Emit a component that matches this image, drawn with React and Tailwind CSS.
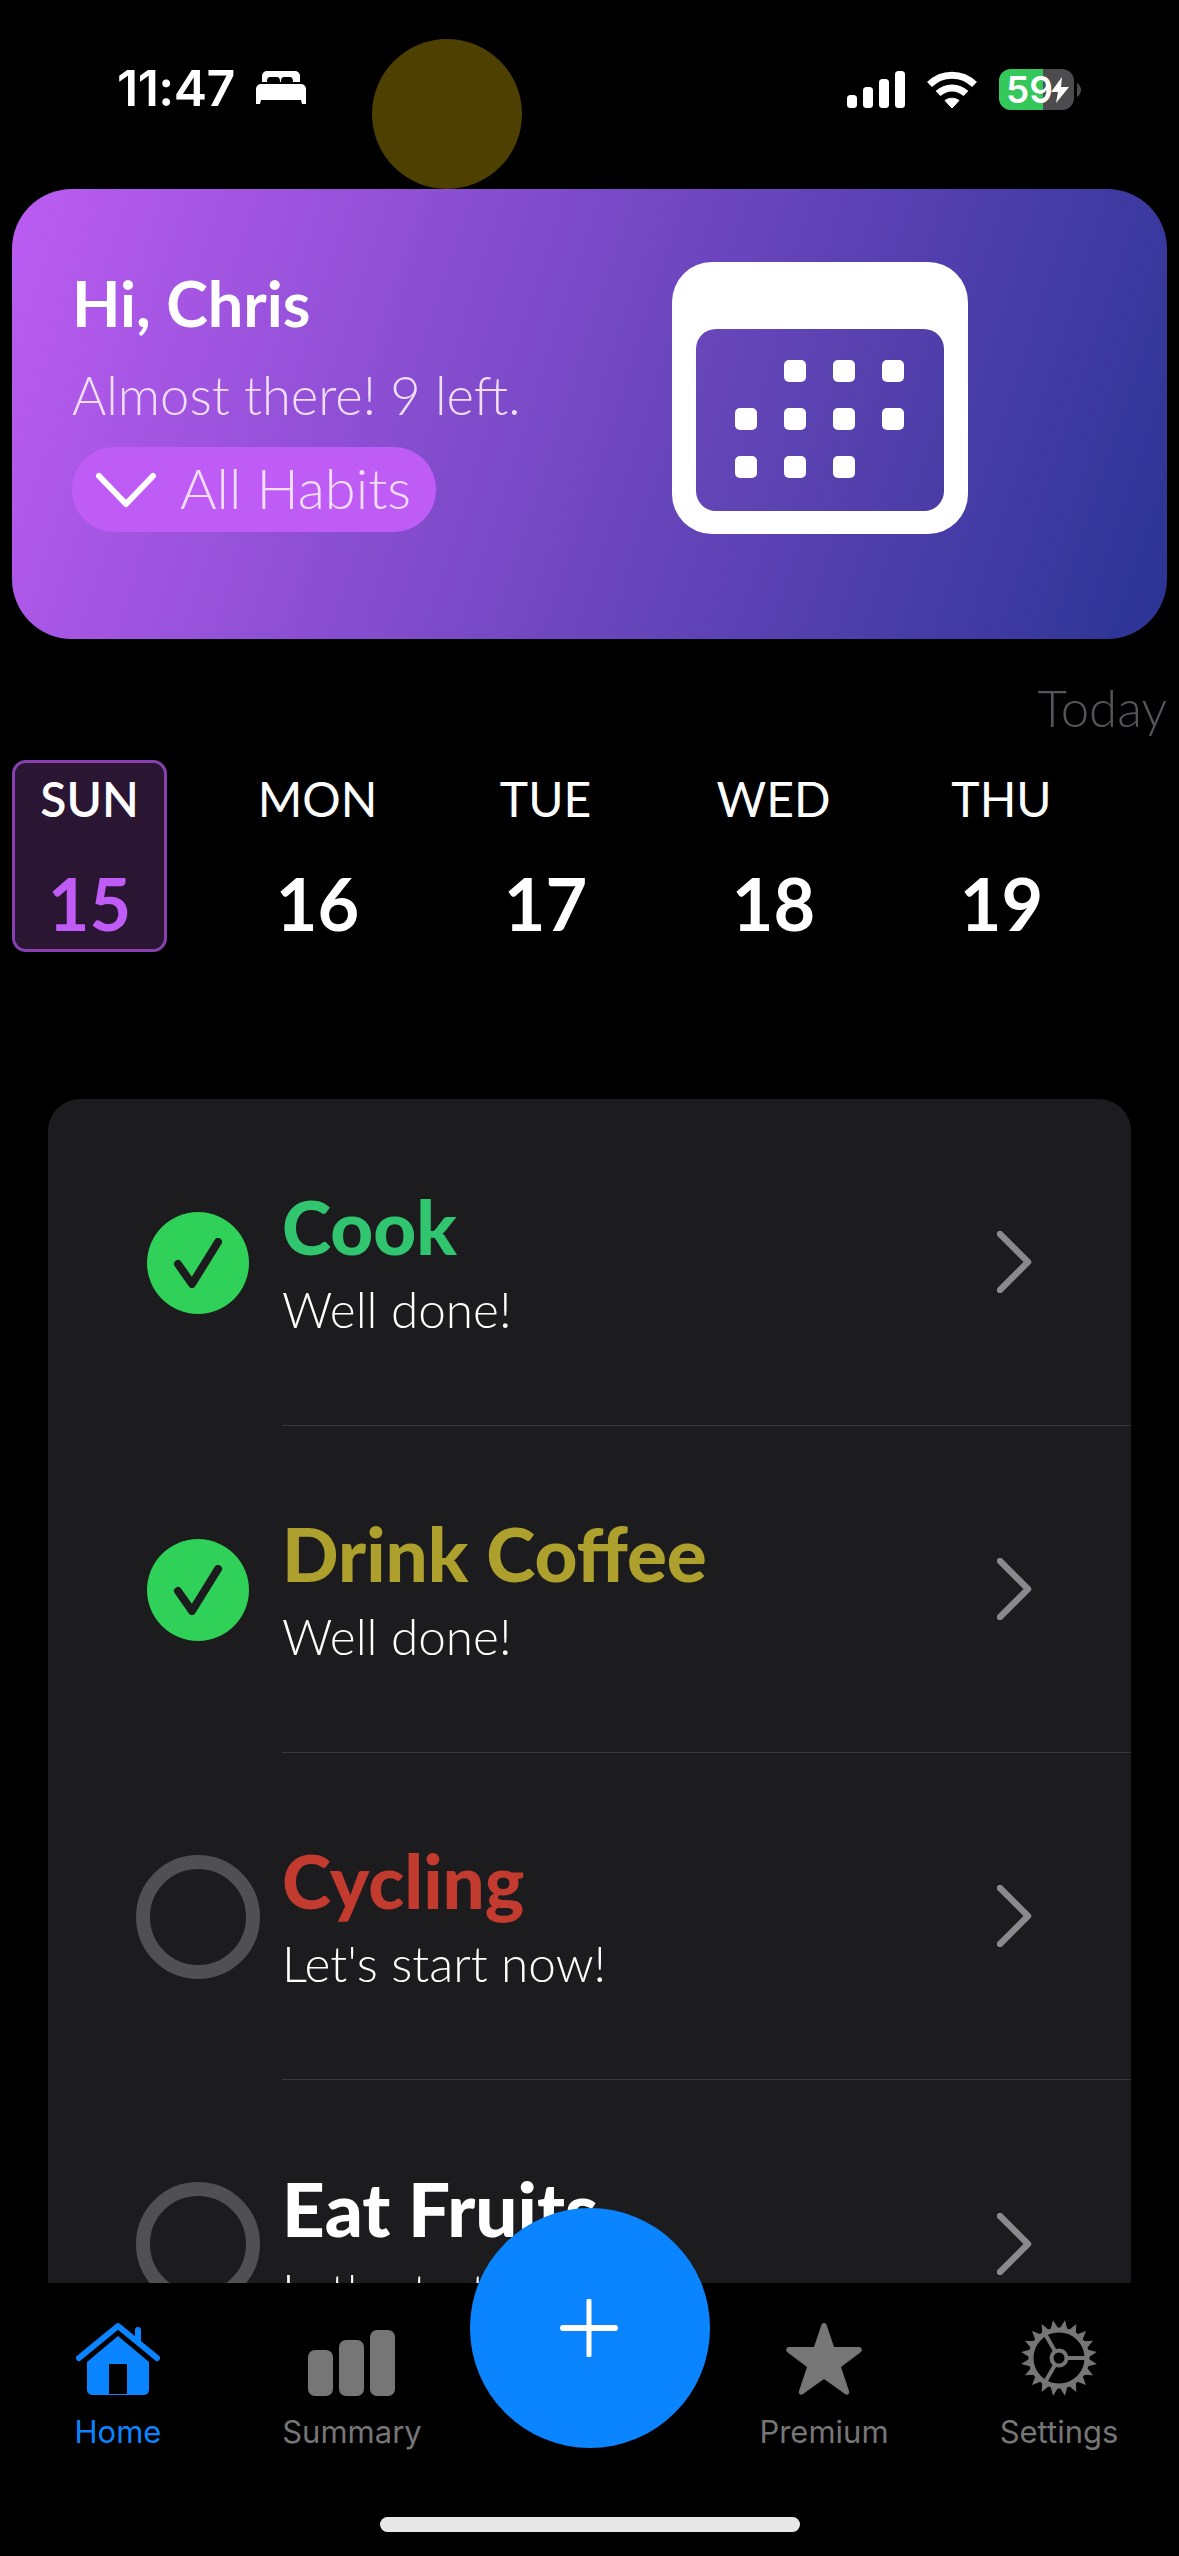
import React from "react";

const sans = "font-['Lato','Noto_Sans',sans-serif]";
const sys = "font-['Inter','Roboto',sans-serif]";

function Bed() {
  return (
    <svg width="52" height="36" viewBox="0 0 52 36" fill="white">
      <path d="M7 12V6a5 5 0 0 1 5-5h28a5 5 0 0 1 5 5v6h-7c0-4-1-5-4-5h-4c-3 0-4 1-4 5h-1c0-4-1-5-4-5h-5c-3 0-4 1-4 5z" />
      <path d="M6 14h40a5 5 0 0 1 5 5v15h-4l-1-4H6l-1 4H1V19a5 5 0 0 1 5-5z" />
    </svg>
  );
}

function Signal() {
  return (
    <svg width="58" height="38" viewBox="0 0 58 38" fill="white">
      <rect x="0" y="24" width="10" height="13" rx="3.5" />
      <rect x="16" y="16" width="10" height="21" rx="3.5" />
      <rect x="32" y="8" width="10" height="29" rx="3.5" />
      <rect x="48" y="0" width="10" height="37" rx="3.5" />
    </svg>
  );
}

function Wifi() {
  return (
    <svg width="50" height="38" viewBox="0 0 50 38" fill="none" stroke="white" strokeWidth="7">
      <path d="M2.5 13.500C15 1 35 1 47.5 13.500" />
      <path d="M11 22.500c8-7.500 20-7.500 28 0" />
      <path d="M18 29.500c4-3 10-3 14 0L25 37z" fill="white" strokeWidth="1" />
    </svg>
  );
}

function Battery() {
  return (
    <div className="flex items-center">
      <div className="relative flex h-[41px] w-[75px] items-center overflow-hidden rounded-[12px] bg-[#4c4c4e]">
        <div className="h-full w-[44px] bg-[#34c759]" />
        <span className={`absolute left-[7px] top-[0px] text-[37px] font-semibold leading-[41px] text-white ${sys}`}>59</span>
        <svg className="absolute left-[52px] top-[8px]" width="18" height="26" viewBox="0 0 18 26" fill="white">
          <path d="M11 0 0 15h7l-2 11L18 10h-8z" />
        </svg>
      </div>
      <svg className="ml-[3px]" width="4" height="14" viewBox="0 0 4 14" fill="#4c4c4e">
        <path d="M0 0c2 1 4 4 4 7s-2 6-4 7z" />
      </svg>
    </div>
  );
}

function CalendarIcon() {
  const dots = [
    [0, 1, 1, 1],
    [1, 1, 1, 1],
    [1, 1, 1, 0],
  ];
  return (
    <div className="flex h-[272px] w-[296px] flex-col rounded-[40px] bg-white px-[24px] pt-[67px] pb-[23px]">
      <div className="flex h-[182px] flex-col gap-[26px] rounded-[20px] bg-[linear-gradient(108deg,#6a47bc_0%,#493ca5_100%)] pl-[39px] pt-[31px]">
        {dots.map((row, i) => (
          <div key={i} className="flex gap-[27px]">
            {row.map((d, j) => (
              <div key={j} className={`h-[22px] w-[22px] rounded-[5px] ${d ? "bg-white" : "bg-transparent"}`} />
            ))}
          </div>
        ))}
      </div>
    </div>
  );
}

function Chevron() {
  return (
    <svg width="36" height="62" viewBox="0 0 36 62" fill="none" stroke="#8a8a8e" strokeWidth="6.500" strokeLinecap="round" strokeLinejoin="round">
      <path d="M3 3l28 28L3 59" />
    </svg>
  );
}

function Check() {
  return (
    <div className="flex h-[102px] w-[102px] items-center justify-center rounded-full bg-[#30d158]">
      <svg width="52" height="50" viewBox="0 0 52 50" fill="none" stroke="#1c1c1e" strokeWidth="8" strokeLinecap="round" strokeLinejoin="round">
        <path d="M6 26l14 20L46 4" />
      </svg>
    </div>
  );
}

function Ring() {
  return <div className="h-[124px] w-[124px] shrink-0 rounded-full border-[14px] border-[#505052]" />;
}

function Row({ title, color, sub, done, last }) {
  return (
    <div className="flex h-[327px] shrink-0">
      <div className="flex w-[234px] shrink-0 items-center justify-center pl-[84px] pr-[18px]">
        {done ? <Check /> : <Ring />}
      </div>
      <div className={`flex flex-1 items-center justify-between pr-[98px] ${last ? "" : "border-b border-[#38383a]"}`}>
        <div className="flex flex-col">
          <div className={`text-[74.500px] font-black leading-[80px] ${sans}`} style={{ color }}>{title}</div>
          <div className={`mt-[14px] text-[49.500px] font-light leading-[58px] text-white ${sans}`}>{sub}</div>
        </div>
        <Chevron />
      </div>
    </div>
  );
}

function Day({ d, n, active }) {
  return (
    <div className={`flex h-[192px] w-[155px] flex-col items-center rounded-[14px] border-[3px] pt-[11px] ${active ? "border-[#8a3fb0] bg-[#2a1533]" : "border-transparent"}`}>
      <div className={`text-[48px] leading-[50px] text-white ${active ? "font-semibold" : "font-normal"} ${sans}`}>{d}</div>
      <div className={`mt-[47px] text-[72px] font-bold leading-[64px] ${active ? "text-[#bf5cf5]" : "text-white"} ${sans}`}>{n}</div>
    </div>
  );
}

function Tab({ label, active, children, className }) {
  return (
    <div className={`flex w-[200px] flex-col items-center ${className || ""}`}>
      <div className="flex h-[80px] items-end justify-center">{children}</div>
      <div className={`mt-[18px] text-[31px] leading-[36px] ${active ? "text-[#0a84ff]" : "text-[#767676]"} ${sys}`}>{label}</div>
    </div>
  );
}

function Gear() {
  const teeth = Array.from({ length: 20 }, (_, i) => i * 18);
  return (
    <svg width="76" height="76" viewBox="-38 -38 76 76" fill="none" stroke="#767676">
      {teeth.map((a) => (
        <path key={a} d="M-3.500 -29L0 -37L3.500 -29z" fill="#767676" strokeWidth="1" transform={`rotate(${a + 9})`} />
      ))}
      <circle r="28" strokeWidth="5" />
      <circle r="7.500" strokeWidth="4" />
      <path d="M7.500 0H28M-3.800 -6.500L-14 -24.200M-3.800 6.500L-14 24.200" strokeWidth="4" />
    </svg>
  );
}

export default function App() {
  const rows = [
    { title: "Cook", color: "#30c56e", sub: "Well done!", done: true },
    { title: "Drink Coffee", color: "#ada02c", sub: "Well done!", done: true },
    { title: "Cycling", color: "#c23b2e", sub: "Let's start now!" },
    { title: "Eat Fruits", color: "#ffffff", sub: "Let's start now!", last: true },
  ];
  return (
    <div className="relative flex h-[2556px] w-[1179px] flex-col overflow-hidden bg-black">
      {/* status bar */}
      <div className="flex h-[189px] shrink-0 items-start justify-between pl-[117px] pr-[98px] pt-[63px]">
        <div className="flex items-center gap-[20px]">
          <span className={`text-[50px] font-semibold leading-[50px] tracking-[-0.5px] text-white ${sys}`}>11:47</span>
          <Bed />
        </div>
        <div className="flex items-center gap-[22px] pt-[6px]">
          <Signal />
          <Wifi />
          <Battery />
        </div>
      </div>
      <div className="absolute left-[372px] top-[39px] h-[150px] w-[150px] rounded-full bg-[#4d4000]" />

      {/* hero card */}
      <div className="mx-[12px] flex h-[450px] shrink-0 items-start justify-between rounded-[60px] bg-[linear-gradient(108deg,#bc5cf2_0%,#2a3494_100%)] pl-[60px] pr-[199px] pt-[73px]">
        <div className="flex flex-col items-start">
          <div className={`mt-[6px] text-[63px] font-bold leading-[70px] text-white ${sans}`}>Hi, Chris</div>
          <div className={`mt-[25px] text-[52.500px] font-light leading-[64px] text-[#f0def8] ${sans}`}>Almost there! 9 left.</div>
          <div className="mt-[20px] flex h-[85px] w-[364px] items-center gap-[24px] rounded-[42px] bg-[#bf5cf5] pl-[24px]">
            <svg width="60" height="40" viewBox="0 0 60 40" fill="none" stroke="white" strokeWidth="6" strokeLinecap="round" strokeLinejoin="round">
              <path d="M3 6l27 28L57 6" />
            </svg>
            <span className={`-mt-[3px] text-[56px] font-light leading-[64px] text-[#f0def8] ${sans}`}>All Habits</span>
          </div>
        </div>
        <CalendarIcon />
      </div>

      {/* Today */}
      <div className={`mr-[12px] mt-[37px] h-[75px] shrink-0 text-right text-[51px] font-light leading-[64px] text-[#56565a] ${sans}`}>Today</div>

      {/* week */}
      <div className="ml-[12px] mt-[9px] flex h-[192px] shrink-0 gap-[73px]">
        <Day d="SUN" n="15" active />
        <Day d="MON" n="16" />
        <Day d="TUE" n="17" />
        <Day d="WED" n="18" />
        <Day d="THU" n="19" />
      </div>

      {/* list */}
      <div className="mx-[48px] mt-[147px] flex min-h-0 flex-1 flex-col overflow-hidden rounded-t-[32px] bg-[#1c1c1e]">
        {rows.map((r) => (
          <Row key={r.title} {...r} />
        ))}
      </div>

      {/* tab bar */}
      <div className="relative h-[273px] shrink-0 bg-black">
        <div className="flex items-start justify-between pl-[18px] pr-[20px] pt-[33px]">
          <div className="flex">
            <Tab label="Home" active>
              <svg width="84" height="74" viewBox="0 0 84 74" fill="none">
                <path d="M3 36 42 4l39 32M62 19V8" stroke="#0a84ff" strokeWidth="6" strokeLinecap="round" strokeLinejoin="round" />
                <path d="M42 14 73 40v28a5 5 0 0 1-5 5H16a5 5 0 0 1-5-5V40zM33 42v30h18V42z" fill="#0a84ff" fillRule="evenodd" />
              </svg>
            </Tab>
            <Tab label="Summary" className="ml-[34px]">
              <svg width="88" height="66" viewBox="0 0 88 66" fill="#767676">
                <rect x="0" y="20" width="25" height="46" rx="7" />
                <rect x="31" y="10" width="25" height="56" rx="7" />
                <rect x="62" y="0" width="25" height="66" rx="7" />
              </svg>
            </Tab>
          </div>
          <div className="flex">
            <Tab label="Premium">
              <svg width="78" height="74" viewBox="0 0 78 74" fill="#767676">
                <path d="M39 1c1.600 0 2.400 1 3 3l7 21h24c3 0 5 2 3 5L56 45l8 24c1 3-2 5-4 3L39 57 18 72c-2 2-5 0-4-3l8-24L2 30c-2-3 0-5 3-5h24l7-21c.6-2 1.400-3 3-3z" />
              </svg>
            </Tab>
            <Tab label="Settings" className="ml-[35px]">
              <Gear />
            </Tab>
          </div>
        </div>
        <div className="absolute bottom-[24px] left-[380px] h-[15px] w-[420px] rounded-full bg-[#e8e8e8]" />
      </div>

      {/* fab */}
      <div className="absolute left-[470px] top-[2208px] flex h-[240px] w-[240px] items-center justify-center rounded-full bg-[#0a84ff]">
        <svg className="mr-[2px]" width="58" height="58" viewBox="0 0 58 58" stroke="white" strokeLinecap="round">
          <path d="M29 2v54" strokeWidth="5" />
          <path d="M3 29h52" strokeWidth="6" />
        </svg>
      </div>
    </div>
  );
}
